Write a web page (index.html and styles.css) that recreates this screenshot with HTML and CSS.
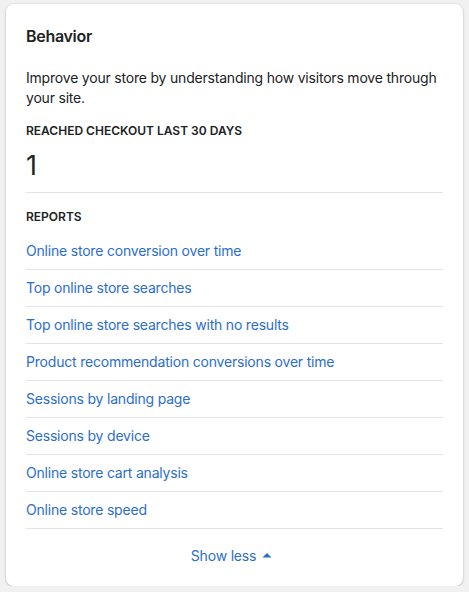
FILE: index.html
```html
<!DOCTYPE html>
<html lang="en">
<head>
    <meta charset="UTF-8">
    <meta name="viewport" content="width=device-width, initial-scale=1.0">
    <title>Behavior</title>
    <link rel="stylesheet" href="styles.css">
</head>
<body>

    <div class="card">
        <!-- Header -->
        <h2 class="card-title">Behavior</h2>
        <p class="card-text">Improve your store by understanding how visitors move through your site.</p>

        <!-- Metric -->
        <h3 class="subheading">Reached checkout last 30 days</h3>
        <div class="metric">1</div>

        <!-- Reports -->
        <div class="reports">
            <h3 class="subheading">Reports</h3>
            <ul class="report-list">
                <li><a href="#">Online store conversion over time</a></li>
                <li><a href="#">Top online store searches</a></li>
                <li><a href="#">Top online store searches with no results</a></li>
                <li><a href="#">Product recommendation conversions over time</a></li>
                <li><a href="#">Sessions by landing page</a></li>
                <li><a href="#">Sessions by device</a></li>
                <li><a href="#">Online store cart analysis</a></li>
                <li><a href="#">Online store speed</a></li>
            </ul>
        </div>

        <div class="toggle-row">
            <button type="button" class="toggle">
                Show less
                <svg class="caret" viewBox="0 0 10 6" width="10" height="6"><path d="M0.5 5.5 L5 1 L9.5 5.5 Z" fill="currentColor"/></svg>
            </button>
        </div>
    </div>

</body>
</html>
```

FILE: styles.css
```css
body {
    margin: 0;
    background-color: #f1f1f1;
    font-family: Inter, "Noto Sans", sans-serif;
    color: #202223;
}
.card {
    width: 457px;
    margin: 4px 6px 0;
    padding: 20px 20px 20px;
    box-sizing: border-box;
    background: #fff;
    border-radius: 8px;
    box-shadow: 0 0 0 1px rgba(63, 63, 68, 0.05), 0 1px 3px rgba(63, 63, 68, 0.2);
}
.card-title {
    margin: 0;
    font-size: 16px;
    line-height: 24px;
    font-weight: 600;
    letter-spacing: -0.3px;
}
.card-text {
    margin: 20px 0 0;
    font-size: 14px;
    line-height: 20px;
    letter-spacing: -0.2px;
}
.subheading {
    margin: 15px 0 0;
    font-size: 12px;
    line-height: 16px;
    font-weight: 600;
    text-transform: uppercase;
}
.metric {
    margin-top: 11px;
    font-size: 27px;
    line-height: 32px;
    padding-bottom: 10px;
    border-bottom: 1px solid #e1e3e5;
}
.reports .subheading {
    margin-top: 16px;
    margin-bottom: 8px;
}
.report-list {
    list-style: none;
    margin: 0;
    padding: 0;
}
.report-list li {
    padding: 8px 0;
    border-bottom: 1px solid #e1e3e5;
    font-size: 14px;
    line-height: 20px;
    letter-spacing: -0.2px;
}
.report-list a {
    color: #2c6ecb;
    text-decoration: none;
}
.toggle-row {
    display: flex;
    justify-content: center;
    margin-top: 17px;
}
.toggle {
    display: flex;
    align-items: center;
    gap: 6px;
    padding: 0;
    margin-left: -6px;
    border: none;
    background: none;
    color: #2c6ecb;
    font-family: inherit;
    font-size: 14px;
    line-height: 20px;
    letter-spacing: -0.2px;
    cursor: pointer;
}
.caret {
    margin-top: -2px;
}
```
